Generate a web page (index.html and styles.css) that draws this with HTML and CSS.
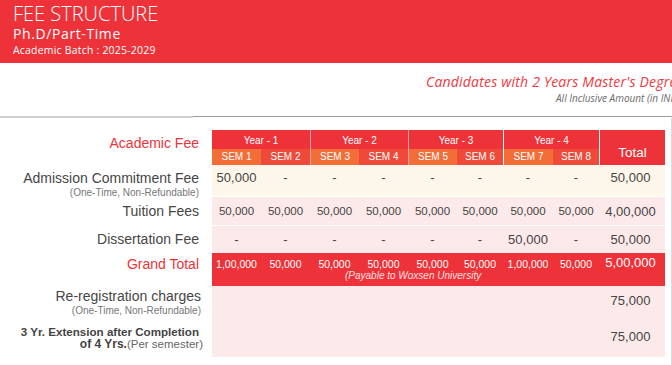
FILE: index.html
```html
<!DOCTYPE html>
<html lang="en">
<head>
<meta charset="utf-8">
<title>Fee Structure</title>
<link rel="stylesheet" href="styles.css">
</head>
<body>
<div class="page">
  <header class="banner">
    <h1 class="title">FEE STRUCTURE</h1>
    <div class="program">Ph.D/Part-Time</div>
    <div class="batch">Academic Batch : 2025-2029</div>
  </header>
  <div class="intro">
    <div class="cand">Candidates with 2 Years Master's Degree</div>
    <div class="incl">All Inclusive Amount (in INR)</div>
  </div>
  <div class="rule"><span class="rule-l"></span><span class="rule-r"></span></div>
  <section class="fees">
    <div class="grid">
      <div class="lbl lbl-head">Academic Fee</div>
      <div class="year">Year - 1</div>
      <div class="year sep">Year - 2</div>
      <div class="year sep">Year - 3</div>
      <div class="year sep-w">Year - 4</div>
      <div class="total-head">Total</div>

      <div class="sem sem-a">SEM 1</div>
      <div class="sem sem-b">SEM 2</div>
      <div class="sem sem-a sep">SEM 3</div>
      <div class="sem sem-b">SEM 4</div>
      <div class="sem sem-a sep">SEM 5</div>
      <div class="sem sem-b">SEM 6</div>
      <div class="sem sem-a sep-w">SEM 7</div>
      <div class="sem sem-b">SEM 8</div>

      <div class="lbl lbl-top"><span class="main">Admission Commitment Fee</span><span class="sub">(One-Time, Non-Refundable)</span></div>
      <div class="v cream top">50,000</div>
      <div class="v cream top">-</div>
      <div class="v cream top">-</div>
      <div class="v cream top">-</div>
      <div class="v cream top">-</div>
      <div class="v cream top">-</div>
      <div class="v cream top">-</div>
      <div class="v cream top">-</div>
      <div class="v cream top tot">50,000</div>

      <div class="lbl lbl-mid">Tuition Fees</div>
      <div class="v pink line small">50,000</div>
      <div class="v pink line small">50,000</div>
      <div class="v pink line small">50,000</div>
      <div class="v pink line small">50,000</div>
      <div class="v pink line small">50,000</div>
      <div class="v pink line small">50,000</div>
      <div class="v pink line small">50,000</div>
      <div class="v pink line small">50,000</div>
      <div class="v pink line tot">4,00,000</div>

      <div class="lbl lbl-mid">Dissertation Fee</div>
      <div class="v pink line">-</div>
      <div class="v pink line">-</div>
      <div class="v pink line">-</div>
      <div class="v pink line">-</div>
      <div class="v pink line">-</div>
      <div class="v pink line">-</div>
      <div class="v pink line">50,000</div>
      <div class="v pink line">-</div>
      <div class="v pink line tot">50,000</div>

      <div class="lbl lbl-grand">Grand Total</div>
      <div class="g">1,00,000</div>
      <div class="g">50,000</div>
      <div class="g">50,000</div>
      <div class="g">50,000</div>
      <div class="g">50,000</div>
      <div class="g">50,000</div>
      <div class="g">1,00,000</div>
      <div class="g">50,000</div>
      <div class="g-total">5,00,000</div>
      <div class="payable">(Payable to Woxsen University</div>

      <div class="lbl lbl-re"><span class="main">Re-registration charges</span><span class="sub">(One-Time, Non-Refundable)</span></div>
      <div class="blank"></div>
      <div class="v pink tot re-val">75,000</div>

      <div class="lbl lbl-ext"><b class="ext1">3 Yr. Extension after Completion</b><b>of 4 Yrs.</b><span class="per">(Per semester)</span></div>
      <div class="blank"></div>
      <div class="v pink tot ext-val">75,000</div>
    </div>
  </section>
</div>
</body>
</html>
```

FILE: styles.css
```css
* { box-sizing: border-box; }
html, body { margin: 0; padding: 0; background: #fff; }
body { width: 672px; height: 365px; overflow: hidden; }
.page { width: 672px; }

.banner {
  background: #ee3239;
  height: 63px;
  padding: 3px 0 0 13px;
  color: #fff;
  font-family: "Open Sans", "DejaVu Sans", sans-serif;
}
.title {
  margin: 0;
  font-size: 20px;
  font-weight: 300;
  line-height: 21px;
  letter-spacing: 0;
}
.program {
  font-size: 14px;
  font-weight: 500;
  line-height: 16px;
  letter-spacing: 0.6px;
  margin-top: 2px;
}
.batch {
  font-size: 10.5px;
  font-weight: 400;
  line-height: 13px;
  letter-spacing: 0.2px;
  margin-top: 2px;
}

.intro {
  height: 53px;
  padding-top: 10px;
  font-family: "Open Sans", "DejaVu Sans", sans-serif;
  font-style: italic;
  white-space: nowrap;
}
.cand {
  padding-left: 426px;
  color: #ee3a43;
  font-size: 14px;
  line-height: 18px;
  letter-spacing: 0.2px;
}
.incl {
  padding-left: 556px;
  color: #6a6a6a;
  font-size: 10px;
  line-height: 13px;
  margin-top: 1px;
}

.rule { display: flex; height: 2px; }
.rule-l { width: 193px; height: 2px; background: #cfcfcf; }
.rule-r { flex: 1; height: 1px; background: #9a9a9a; }

.fees {
  height: 247px;
  border-right: 1px solid #dcdcdc;
  padding-top: 12px;
  font-family: "Liberation Sans", Arial, sans-serif;
}
.grid {
  display: grid;
  grid-template-columns: 212px 49px 49px 49px 49px 49px 46px 50px 46px 66px;
  grid-template-rows: 19px 16px 31px 29px 28px 17px 16px 35px 36px;
}

.lbl {
  grid-column: 1;
  text-align: right;
  padding-right: 13px;
  color: #464646;
  font-size: 14px;
  line-height: 14px;
  white-space: nowrap;
}
.lbl .main { display: block; }
.lbl .sub { display: block; font-size: 10px; line-height: 12px; color: #777; margin-top: 2px; }
.lbl-head { grid-row: 1 / span 2; color: #ee3239; padding-top: 6px; }
.lbl-top { padding-top: 6px; }
.lbl-mid { display: flex; align-items: center; justify-content: flex-end; }
.lbl-grand { grid-row: 6 / span 2; color: #ee3239; padding-top: 4px; }
.lbl-re { padding-top: 3px; padding-right: 11px; }
.lbl-ext { padding-top: 4px; padding-right: 9px; font-size: 12px; line-height: 13px; color: #444; }
.lbl-ext b { font-weight: 700; }
.lbl-ext .ext1 { display: block; font-size: 11.6px; padding-right: 4px; }
.lbl-ext .per { font-size: 11.5px; color: #666; }

.year {
  grid-column: span 2;
  background: #ee3239;
  color: #fff;
  font-size: 10px;
  text-align: center;
  line-height: 19px;
  padding-top: 1px;
}
.sep { border-left: 1px solid #f7a3a6; }
.sep-w { border-left: 1px solid #fff; }
.total-head {
  grid-column: 10;
  grid-row: 1 / span 2;
  background: #ee3239;
  border-left: 1px solid #fff;
  color: #fff;
  font-size: 13.5px;
  text-align: center;
  padding-top: 16px;
  line-height: 14px;
}
.sem {
  color: #fff;
  font-size: 10px;
  text-align: center;
  line-height: 16px;
}
.sem-a { background: #f36d38; }
.sem-b { background: #ef4a39; }

.v {
  color: #454545;
  font-size: 13px;
  line-height: 13px;
  text-align: center;
}
.cream { background: #fdf6ea; }
.pink { background: #fce9e9; }
.top { padding-top: 6px; }
.line {
  border-top: 1px solid #fff;
  display: flex;
  align-items: center;
  justify-content: center;
}
.small { font-size: 11.5px; }
.tot { padding-right: 3px; }

.g {
  background: #ee3239;
  color: #fff;
  font-size: 10.5px;
  line-height: 12px;
  text-align: center;
  padding-top: 5px;
}
.g-total {
  grid-column: 10;
  grid-row: 6 / span 2;
  background: #ee3239;
  color: #fff;
  font-size: 13px;
  line-height: 13px;
  text-align: center;
  padding: 3px 3px 0 0;
}
.payable {
  grid-column: 2 / span 8;
  background: #ee3239;
  color: #fbe0e0;
  font-size: 10px;
  font-style: italic;
  line-height: 12px;
  padding-left: 133px;
}
.blank {
  grid-column: 2 / span 8;
  background: #fce9e9;
}
.re-val { padding-top: 8px; }
.ext-val { padding-top: 9px; }
```
